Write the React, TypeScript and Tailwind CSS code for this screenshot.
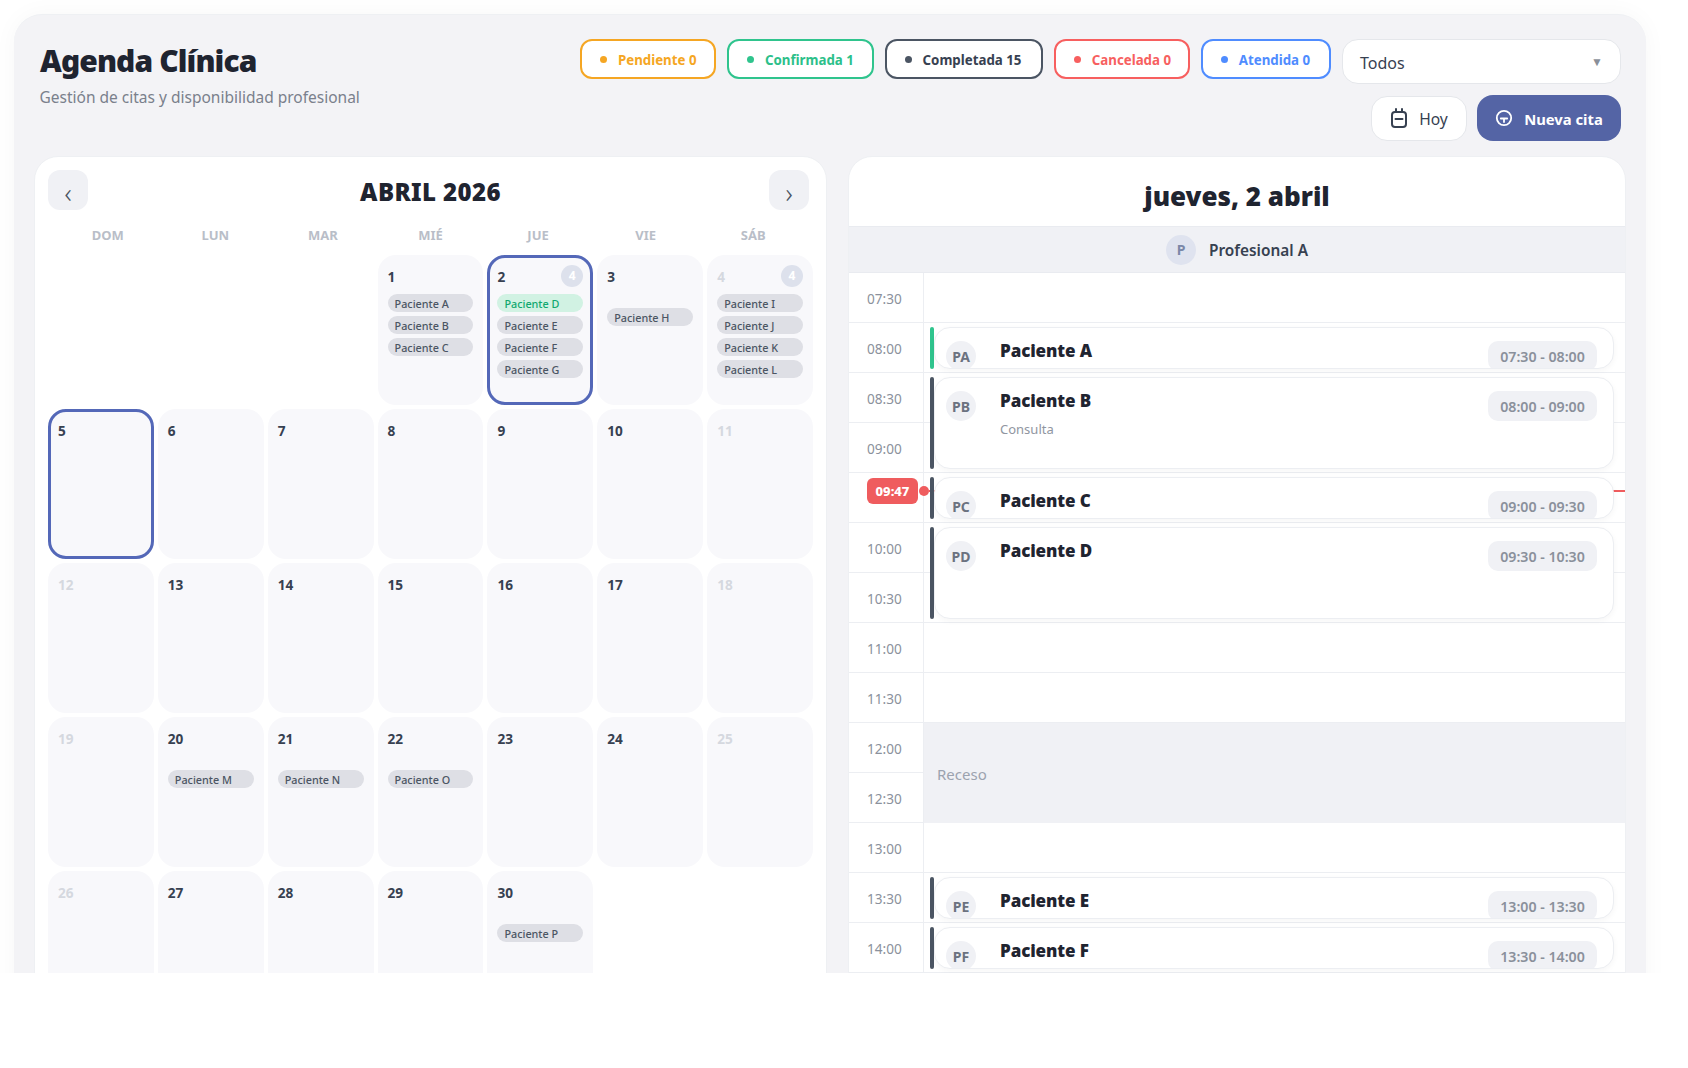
const WD = ['DOM', 'LUN', 'MAR', 'MIÉ', 'JUE', 'VIE', 'SÁB'];

type Pat = { n: string; green?: boolean };
type Cell = { d: number; off?: boolean; sel?: boolean; badge?: number; pats?: Pat[] } | null;

const CELLS: Cell[] = [
  null, null, null,
  { d: 1, pats: [{ n: 'Paciente A' }, { n: 'Paciente B' }, { n: 'Paciente C' }] },
  { d: 2, sel: true, badge: 4, pats: [{ n: 'Paciente D', green: true }, { n: 'Paciente E' }, { n: 'Paciente F' }, { n: 'Paciente G' }] },
  { d: 3, pats: [{ n: 'Paciente H' }] },
  { d: 4, off: true, badge: 4, pats: [{ n: 'Paciente I' }, { n: 'Paciente J' }, { n: 'Paciente K' }, { n: 'Paciente L' }] },
  { d: 5, sel: true }, { d: 6 }, { d: 7 }, { d: 8 }, { d: 9 }, { d: 10 }, { d: 11, off: true },
  { d: 12, off: true }, { d: 13 }, { d: 14 }, { d: 15 }, { d: 16 }, { d: 17 }, { d: 18, off: true },
  { d: 19, off: true },
  { d: 20, pats: [{ n: 'Paciente M' }] },
  { d: 21, pats: [{ n: 'Paciente N' }] },
  { d: 22, pats: [{ n: 'Paciente O' }] },
  { d: 23 }, { d: 24 }, { d: 25, off: true },
  { d: 26, off: true }, { d: 27 }, { d: 28 }, { d: 29 },
  { d: 30, pats: [{ n: 'Paciente P' }] },
];

const TIMES = ['07:30', '08:00', '08:30', '09:00', '', '10:00', '10:30', '11:00', '11:30', '12:00', '12:30', '13:00', '13:30', '14:00'];

const EVENTS = [
  { top: 54, h: 42, ini: 'PA', name: 'Paciente A', time: '07:30 - 08:00', green: true },
  { top: 104, h: 92, ini: 'PB', name: 'Paciente B', time: '08:00 - 09:00', sub: 'Consulta' },
  { top: 204, h: 42, ini: 'PC', name: 'Paciente C', time: '09:00 - 09:30' },
  { top: 254, h: 92, ini: 'PD', name: 'Paciente D', time: '09:30 - 10:30' },
  { top: 604, h: 42, ini: 'PE', name: 'Paciente E', time: '13:00 - 13:30' },
  { top: 654, h: 42, ini: 'PF', name: 'Paciente F', time: '13:30 - 14:00' },
];

function StatusPill({ label, box, text, dot, w }: { label: string; box: string; text: string; dot: string; w: string }) {
  return (
    <div className={`flex h-10 items-center gap-[11px] whitespace-nowrap rounded-xl border-2 bg-white pl-[18px] text-[13.3px] font-bold ${w} ${box} ${text}`}>
      <span className={`h-[7px] w-[7px] shrink-0 rounded-full ${dot}`} />
      <span className="pt-[3px]">{label}</span>
    </div>
  );
}

function DayCell({ c }: { c: Cell }) {
  if (!c) return <div />;
  return (
    <div className={`flex h-[150px] flex-col rounded-[18px] border-[3px] bg-[#f8f8fb] p-[7px] ${c.sel ? 'border-[#5468b8]' : 'border-transparent'}`}>
      <div className="flex h-[22px] items-center justify-between">
        <span className={`pt-[2px] text-[13.6px] font-bold leading-[20px] ${c.off ? 'text-[#d5d8df]' : 'text-[#374151]'}`}>{c.d}</span>
        {c.badge ? (
          <span className="flex h-[22px] w-[22px] items-center justify-center rounded-full bg-[#dde1ec] text-[12px] font-bold text-white">{c.badge}</span>
        ) : null}
      </div>
      <div className="mt-[7px] flex min-h-[46px] flex-col justify-center gap-1">
        {c.pats?.map((p) => (
          <div key={p.n} className={`h-[18px] rounded-full pl-[7px] pt-[1px] text-[10.8px] font-medium leading-[18px] ${p.green ? 'bg-[#d1f2e3] text-[#10a86f]' : 'bg-[#dedfe5] text-[#4b5563]'}`}>
            {p.n}
          </div>
        ))}
      </div>
    </div>
  );
}

function HoyIcon() {
  return (
    <svg className="mb-[4px]" width="18" height="20" viewBox="0 0 18 20" fill="none" stroke="#374151" strokeWidth="2" strokeLinecap="round">
      <rect x="2" y="4" width="14" height="15" rx="3" />
      <path d="M6 1v3M12 1v3M5.5 11h7" />
    </svg>
  );
}

function PlusCircleIcon() {
  return (
    <svg className="mb-[2px]" width="18" height="18" viewBox="0 0 18 18" fill="none" stroke="#ffffff" strokeWidth="1.8" strokeLinecap="round">
      <circle cx="9" cy="9" r="7.2" />
      <path d="M5.8 9.5h6.4M9 9.5v3.5" />
    </svg>
  );
}

export default function App() {
  return (
    <div className="h-[973px] overflow-hidden bg-white pl-[14px] pr-[42px] pt-[14px] font-['Noto_Sans',sans-serif]">
      <div className="min-h-[1100px] rounded-t-[28px] border-t border-[#eef0f3] bg-[#f3f3f6] px-[20px] pt-[24px] shadow-[0_0_24px_rgba(0,0,0,0.035)]">
        <header className="flex items-start justify-between pl-[5px] pr-[5px]">
          <div>
            <h1 className="pl-[1px] text-[30px] font-black leading-[44px] tracking-[-0.9px] text-[#1f2430]">Agenda Clínica</h1>
            <p className="mt-[3px] pl-[0.5px] text-[15.5px] leading-[22px] text-[#7a808c]">Gestión de citas y disponibilidad profesional</p>
          </div>
          <div className="flex flex-col items-end gap-[11px]">
            <div className="flex items-start gap-[10.6px]">
              <StatusPill w="w-[136.4px]" label="Pendiente 0" box="border-[#f5a623]" text="text-[#f5a623]" dot="bg-[#f5a623]" />
              <StatusPill w="w-[147px]" label="Confirmada 1" box="border-[#2fc48d]" text="text-[#2cc08a]" dot="bg-[#2fc48d]" />
              <StatusPill w="w-[158.6px]" label="Completada 15" box="border-[#4b5563]" text="text-[#374151]" dot="bg-[#4b5563]" />
              <StatusPill w="w-[136.4px]" label="Cancelada 0" box="border-[#f75f5f]" text="text-[#f75f5f]" dot="bg-[#f75f5f]" />
              <StatusPill w="w-[130.7px]" label="Atendida 0" box="border-[#4f8cff]" text="text-[#4f8cff]" dot="bg-[#4f8cff]" />
              <div className="flex h-[45px] w-[279px] items-center justify-between rounded-2xl border border-[#e5e7eb] bg-white pl-[17px] pr-[17px]">
                <span className="pt-[2px] text-[16px] text-[#374151]">Todos</span>
                <span className="text-[12px] text-[#8a8f99]">▼</span>
              </div>
            </div>
            <div className="flex items-center gap-[10px]">
              <button className="flex h-[45px] w-[96px] items-center justify-center gap-[11px] rounded-2xl border border-[#e5e7eb] bg-white pt-[3px] text-[15.6px] text-[#374151]">
                <HoyIcon />
                Hoy
              </button>
              <button className="flex h-[46px] w-[144px] items-center justify-center gap-[11px] rounded-2xl bg-[#5464a5] pt-[2px] text-[14.8px] font-bold text-white">
                <PlusCircleIcon />
                Nueva cita
              </button>
            </div>
          </div>
        </header>

        <main className="mt-[15px] grid grid-cols-[793px_778px] items-stretch gap-x-[21px]">
          <section className="rounded-t-3xl border border-[#eef0f3] bg-white px-[13px] pt-[13px]">
            <div className="flex items-center justify-between pr-[4px]">
              <button className="flex h-10 w-10 items-center justify-center rounded-xl bg-[#f0f1f5] pt-[5px] text-[27px] font-light leading-none text-[#4b5563]">‹</button>
              <h2 className="pl-[4px] pt-[3px] text-[24px] font-black tracking-[0.4px] text-[#1f2430]">ABRIL 2026</h2>
              <button className="flex h-10 w-10 items-center justify-center rounded-xl bg-[#f0f1f5] pt-[5px] text-[27px] font-light leading-none text-[#4b5563]">›</button>
            </div>
            <div className="mt-[15px] grid grid-cols-7 px-[6px]">
              {WD.map((w) => (
                <div key={w} className="text-center text-[13px] font-bold leading-[20px] text-[#b9bec8]">{w}</div>
              ))}
            </div>
            <div className="mt-[10px] grid grid-cols-7 gap-1">
              {CELLS.map((c, i) => (
                <DayCell key={i} c={c} />
              ))}
            </div>
          </section>

          <section className="overflow-hidden rounded-t-3xl border border-[#eef0f3] bg-white">
            <div className="flex h-[70px] items-center justify-center border-b border-[#e9ebf0]">
              <h2 className="mt-[10px] text-[26px] font-black text-[#1f2430]">jueves, 2 abril</h2>
            </div>
            <div className="flex h-[46px] items-center justify-center gap-[13px] border-b border-[#e9ebf0] bg-[#f0f1f5]">
              <span className="flex h-[30px] w-[30px] items-center justify-center rounded-full bg-[#dfe3ef] text-[14px] font-bold text-[#7b87a8]">P</span>
              <span className="pt-[3px] text-[15.4px] font-semibold text-[#374151]">Profesional A</span>
            </div>
            <div className="relative">
              {TIMES.map((t, i) => (
                <div key={i} className="flex h-[50px] border-b border-[#eceef2]">
                  <div className="flex w-[75px] items-center border-r border-[#eceef2] pl-[18px] pt-[4px] text-[13.6px] text-[#8b919c]">{t}</div>
                </div>
              ))}

              <div className="absolute left-[75px] right-0 top-[450px] flex h-[100px] items-center bg-[#f0f1f5] pl-[13px] pt-[2px] text-[15px] text-[#9ca3af]">Receso</div>

              <div className="absolute left-[80px] right-0 top-[217px] h-[2px] bg-[#ef5c5e]" />

              {EVENTS.map((e) => (
                <div key={e.ini} className="absolute left-[81px] right-[11px] flex" style={{ top: e.top, height: e.h }}>
                  <div className={`w-[4px] shrink-0 rounded-[3px] ${e.green ? 'bg-[#2fc48d]' : 'bg-[#4b5563]'}`} />
                  <div className="relative flex-1 overflow-hidden rounded-[16px] border border-[#eceef2] bg-white pl-[11px] pr-[16px] pt-[13px] shadow-[0_2px_6px_rgba(0,0,0,0.04)]">
                    <div className="flex items-start">
                      <span className="flex h-[30px] w-[30px] shrink-0 items-center justify-center rounded-full bg-[#f0f1f5] text-[14px] font-bold text-[#6b7280]">{e.ini}</span>
                      <div className="ml-[24px] flex-1">
                        <div className="-mt-[1px] text-[17px] font-black leading-[21px] tracking-[-0.1px] text-[#1f2430]">{e.name}</div>
                        {e.sub ? <div className="mt-[9px] text-[13px] leading-[18px] text-[#9096a1]">{e.sub}</div> : null}
                      </div>
                      <span className="flex h-[30px] w-[109px] shrink-0 items-center justify-center rounded-[10px] bg-[#f0f1f5] pt-[1px] text-[14.2px] font-semibold text-[#8a909b]">{e.time}</span>
                    </div>
                  </div>
                </div>
              ))}

              <div className="absolute left-[18px] top-[205px] flex items-center">
                <span className="flex h-[26px] w-[51px] items-center justify-center rounded-md bg-[#ef5c5e] pt-[1px] text-[13px] font-extrabold text-white">09:47</span>
                <span className="ml-[1px] h-[10px] w-[10px] rounded-full bg-[#ef5c5e]" />
              </div>
            </div>
          </section>
        </main>
      </div>
    </div>
  );
}
